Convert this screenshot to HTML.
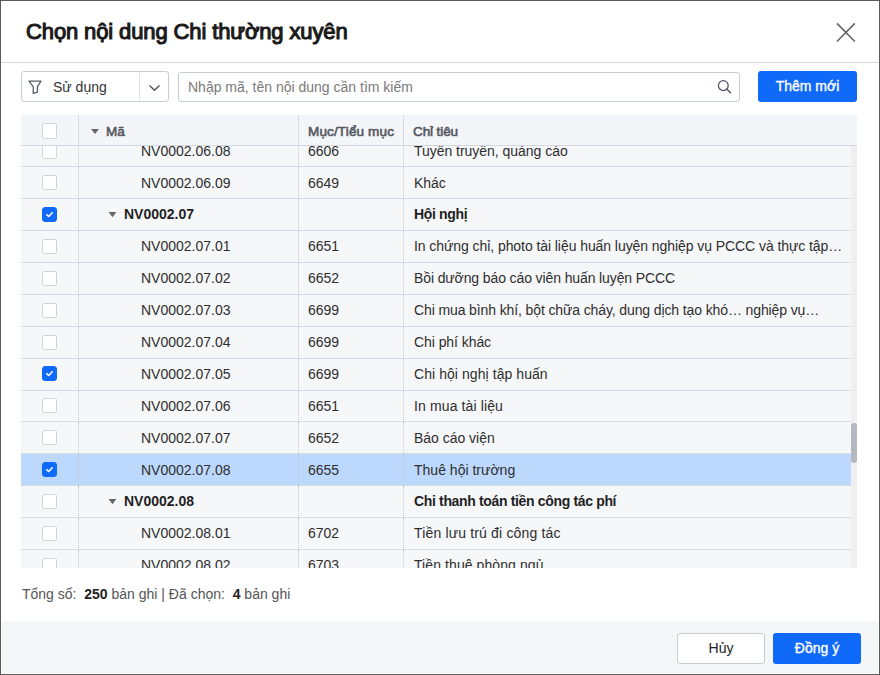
<!DOCTYPE html>
<html><head><meta charset="utf-8"><style>
*{box-sizing:border-box}
html,body{margin:0;padding:0;width:880px;height:675px;overflow:hidden;background:#fff}
body{font-family:"Liberation Sans",sans-serif;color:#212121;position:relative}
.frame{position:absolute;left:0;top:0;width:880px;height:675px;border:1px solid #5d5b59;background:#fff}
.title{position:absolute;left:26px;top:20px;font-size:22px;letter-spacing:-0.12px;font-weight:400;-webkit-text-stroke:1.1px #1a1a1a;color:#1a1a1a;white-space:nowrap;line-height:24px}
.close{position:absolute;left:835px;top:21px}
.sep{position:absolute;left:1px;top:62px;width:877px;height:1px;background:#d6d8de}
.filter{position:absolute;left:21px;top:71px;width:148px;height:31px;border:1px solid #c8ccd3;border-radius:3px;background:#fff}
.filter .fdiv{position:absolute;left:117px;top:1px;width:1px;height:28px;background:#dfe2e7}
.filter .ftxt{position:absolute;left:31px;top:1px;line-height:29px;font-size:14px;color:#333;white-space:nowrap}
.search{position:absolute;left:178px;top:72px;width:562px;height:30px;border:1px solid #c8ccd3;border-radius:3px;background:#fff}
.search .ph{position:absolute;left:9px;top:0;line-height:28px;font-size:14px;color:#7a7a7a;white-space:nowrap}
.btn-add{position:absolute;left:758px;top:71px;width:99px;height:31px;border-radius:3px;background:#0f69f9;color:#fff;font-size:14px;font-weight:400;-webkit-text-stroke:0.35px #fff;text-align:center;line-height:31px;white-space:nowrap}
.thead{position:absolute;left:21px;top:115px;width:836px;height:31px;background:#f4f5f9;border-bottom:1px solid #d5d7de}
.thead .hv{position:absolute;top:0;width:1px;height:30px;background:#d8dae1}
.thead .h{position:absolute;top:2px;line-height:30px;font-size:13.5px;font-weight:400;-webkit-text-stroke:0.6px #545961;letter-spacing:-0.1px;color:#545961;white-space:nowrap}
.tbody{position:absolute;left:21px;top:146px;width:836px;height:422px;overflow:hidden;background:#f6f7f9}
.row{position:absolute;left:0;width:830px;border-bottom:1px solid #d9dbe2;background:#f6f7f9;font-size:14px;white-space:nowrap}
.row.sel{background:#bdd8fd}
.cb{position:absolute;left:21px;top:50%;margin-top:-7.5px;width:15px;height:15px;border:1px solid #d2d5dc;border-radius:2px;background:#fff}
.cb.chk{background:#0f69f9;border-color:#0f69f9;border-radius:3px}
.cb svg{position:absolute;left:-1px;top:-1px}
.cb.chk{line-height:0}
.dv{position:absolute;top:0;bottom:-1px;width:1px;border-left:1px dotted #c4c7cf}
.d1{left:57px} .d2{left:277px} .d3{left:382px}
.code{position:absolute;top:1px;left:120px;color:#2e2e2e}
.gcode{left:103px;font-weight:700;color:#1f1f1f}
.tri2{position:absolute;left:87px}
.tri{position:absolute;left:87px;top:50%;margin-top:-3px;width:0;height:0;border-left:4.5px solid transparent;border-right:4.5px solid transparent;border-top:5px solid #666}
.muc{position:absolute;top:1px;left:287px;color:#2e2e2e}
.ct{position:absolute;top:1px;left:393px;letter-spacing:-0.12px;color:#2e2e2e}
.grp .ct{font-weight:700;letter-spacing:-0.4px;color:#1f1f1f}
.sb-track{position:absolute;left:830px;top:0;width:6px;height:100%;background:#efeff0}
.sb-thumb{position:absolute;left:830px;top:277px;width:6px;height:40px;border-radius:3px;background:#b3b8c1}
.summary{position:absolute;left:22px;top:585px;font-size:14px;color:#555;white-space:nowrap;line-height:18px}
.summary b{color:#222}
.footer{position:absolute;left:2px;top:621px;width:876px;height:52px;background:#f5f6f8}
.btn-cancel{position:absolute;left:677px;top:633px;width:88px;height:31px;border:1px solid #c9ccd3;border-radius:3px;background:#fff;font-size:14px;color:#222;text-align:center;line-height:29px}
.btn-ok{position:absolute;left:773px;top:633px;width:88px;height:31px;border-radius:3px;background:#0f69f9;color:#fff;font-size:14px;font-weight:400;-webkit-text-stroke:0.35px #fff;text-align:center;line-height:31px}
</style></head><body>
<div class="frame"></div>
<div class="title">Chọn nội dung Chi thường xuyên</div>
<svg class="close" width="24" height="24" viewBox="0 0 24 24"><path d="M2 2.4 L19.8 20.5 M19.8 2.4 L2 20.5" stroke="#666" stroke-width="1.6" fill="none"/></svg>
<div class="sep"></div>
<div class="filter">
 <svg style="position:absolute;left:6px;top:8px" width="14" height="15" viewBox="0 0 14 15"><path d="M1 1.2 H13 L9.4 6.6 V12.2 L5.2 13.4 V6.6 Z" fill="none" stroke="#555b66" stroke-width="1.25" stroke-linejoin="round"/></svg>
 <span class="ftxt">Sử dụng</span>
 <div class="fdiv"></div>
 <svg style="position:absolute;left:126px;top:12px" width="14" height="9" viewBox="0 0 14 9"><path d="M1.5 1.5 L6.5 6.2 L11.5 1.5" fill="none" stroke="#555" stroke-width="1.5"/></svg>
</div>
<div class="search"><span class="ph">Nhập mã, tên nội dung cần tìm kiếm</span>
 <svg style="position:absolute;left:537px;top:6px" width="18" height="18" viewBox="0 0 18 18"><circle cx="7.3" cy="6.6" r="4.9" fill="none" stroke="#4f5663" stroke-width="1.25"/><path d="M10.8 10.1 L14.4 13.7" stroke="#4f5663" stroke-width="1.4" stroke-linecap="round"/></svg>
</div>
<div class="btn-add">Thêm mới</div>
<div class="thead">
 <div class="cb" style="top:8px;margin-top:0;height:16px"></div>
 <div class="hv" style="left:57px"></div>
 <span class="tri" style="left:70px;top:14px;margin-top:0"></span>
 <span class="h" style="left:85px">Mã</span>
 <div class="hv" style="left:277px"></div>
 <span class="h" style="left:287px;letter-spacing:0.15px">Mục/Tiểu mục</span>
 <div class="hv" style="left:382px"></div>
 <span class="h" style="left:392px">Chỉ tiêu</span>
</div>
<div class="tbody">
<div class="row" style="top:-11px;height:32px;line-height:31px"><div class="cb" style="top:9px;margin-top:0"></div><div class="dv d1"></div><div class="dv d2"></div><div class="dv d3"></div><span class="code" style="top:1px">NV0002.06.08</span><span class="muc" style="top:1px">6606</span><span class="ct" style="top:1px;letter-spacing:-0.029px">Tuyên truyền, quảng cáo</span></div><div class="row" style="top:21px;height:32px;line-height:31px"><div class="cb" style="top:8px;margin-top:0"></div><div class="dv d1"></div><div class="dv d2"></div><div class="dv d3"></div><span class="code" style="top:1px">NV0002.06.09</span><span class="muc" style="top:1px">6649</span><span class="ct" style="top:1px;letter-spacing:-0.053px">Khác</span></div><div class="row grp" style="top:53px;height:32px;line-height:31px"><div class="cb chk" style="top:8px;margin-top:0"><svg width="15" height="15" viewBox="0 0 15 15"><path d="M4.8 7.8 L6.8 9.5 L10.2 5.8" fill="none" stroke="#fff" stroke-width="1.6" stroke-linecap="round" stroke-linejoin="round"/></svg></div><div class="dv d1"></div><div class="dv d2"></div><div class="dv d3"></div><svg class="tri2" style="top:13px" width="9" height="6" viewBox="0 0 9 6"><path d="M0.6 0 H8.4 L4.5 5.2 Z" fill="#666"/></svg><span class="code gcode" style="top:0px">NV0002.07</span><span class="muc" style="top:0px"></span><span class="ct" style="top:0px;letter-spacing:-0.343px">Hội nghị</span></div><div class="row" style="top:85px;height:32px;line-height:31px"><div class="cb" style="top:8px;margin-top:0"></div><div class="dv d1"></div><div class="dv d2"></div><div class="dv d3"></div><span class="code" style="top:0px">NV0002.07.01</span><span class="muc" style="top:0px">6651</span><span class="ct" style="top:0px;letter-spacing:-0.068px">In chứng chỉ, photo tài liệu huấn luyện nghiệp vụ PCCC và thực tập…</span></div><div class="row" style="top:117px;height:32px;line-height:31px"><div class="cb" style="top:8px;margin-top:0"></div><div class="dv d1"></div><div class="dv d2"></div><div class="dv d3"></div><span class="code" style="top:0px">NV0002.07.02</span><span class="muc" style="top:0px">6652</span><span class="ct" style="top:0px;letter-spacing:-0.112px">Bồi dưỡng báo cáo viên huấn luyện PCCC</span></div><div class="row" style="top:149px;height:32px;line-height:31px"><div class="cb" style="top:8px;margin-top:0"></div><div class="dv d1"></div><div class="dv d2"></div><div class="dv d3"></div><span class="code" style="top:0px">NV0002.07.03</span><span class="muc" style="top:0px">6699</span><span class="ct" style="top:0px;letter-spacing:-0.115px">Chi mua bình khí, bột chữa cháy, dung dịch tạo khó… nghiệp vụ…</span></div><div class="row" style="top:181px;height:32px;line-height:31px"><div class="cb" style="top:8px;margin-top:0"></div><div class="dv d1"></div><div class="dv d2"></div><div class="dv d3"></div><span class="code" style="top:0px">NV0002.07.04</span><span class="muc" style="top:0px">6699</span><span class="ct" style="top:0px;letter-spacing:-0.065px">Chi phí khác</span></div><div class="row" style="top:213px;height:32px;line-height:31px"><div class="cb chk" style="top:7px;margin-top:0"><svg width="15" height="15" viewBox="0 0 15 15"><path d="M4.8 7.8 L6.8 9.5 L10.2 5.8" fill="none" stroke="#fff" stroke-width="1.6" stroke-linecap="round" stroke-linejoin="round"/></svg></div><div class="dv d1"></div><div class="dv d2"></div><div class="dv d3"></div><span class="code" style="top:0px">NV0002.07.05</span><span class="muc" style="top:0px">6699</span><span class="ct" style="top:0px;letter-spacing:0.065px">Chi hội nghị tập huấn</span></div><div class="row" style="top:245px;height:31px;line-height:30px"><div class="cb" style="top:7px;margin-top:0"></div><div class="dv d1"></div><div class="dv d2"></div><div class="dv d3"></div><span class="code" style="top:0px">NV0002.07.06</span><span class="muc" style="top:0px">6651</span><span class="ct" style="top:0px;letter-spacing:0.123px">In mua tài liệu</span></div><div class="row" style="top:276px;height:32px;line-height:31px"><div class="cb" style="top:8px;margin-top:0"></div><div class="dv d1"></div><div class="dv d2"></div><div class="dv d3"></div><span class="code" style="top:1px">NV0002.07.07</span><span class="muc" style="top:1px">6652</span><span class="ct" style="top:1px;letter-spacing:-0.02px">Báo cáo viện</span></div><div class="row sel" style="top:308px;height:32px;line-height:31px"><div class="cb chk" style="top:8px;margin-top:0"><svg width="15" height="15" viewBox="0 0 15 15"><path d="M4.8 7.8 L6.8 9.5 L10.2 5.8" fill="none" stroke="#fff" stroke-width="1.6" stroke-linecap="round" stroke-linejoin="round"/></svg></div><div class="dv d1"></div><div class="dv d2"></div><div class="dv d3"></div><span class="code" style="top:1px">NV0002.07.08</span><span class="muc" style="top:1px">6655</span><span class="ct" style="top:1px;letter-spacing:0.009px">Thuê hội trường</span></div><div class="row grp" style="top:340px;height:32px;line-height:31px"><div class="cb" style="top:8px;margin-top:0"></div><div class="dv d1"></div><div class="dv d2"></div><div class="dv d3"></div><svg class="tri2" style="top:13px" width="9" height="6" viewBox="0 0 9 6"><path d="M0.6 0 H8.4 L4.5 5.2 Z" fill="#666"/></svg><span class="code gcode" style="top:0px">NV0002.08</span><span class="muc" style="top:0px"></span><span class="ct" style="top:0px;letter-spacing:-0.342px">Chi thanh toán tiền công tác phí</span></div><div class="row" style="top:372px;height:32px;line-height:31px"><div class="cb" style="top:8px;margin-top:0"></div><div class="dv d1"></div><div class="dv d2"></div><div class="dv d3"></div><span class="code" style="top:0px">NV0002.08.01</span><span class="muc" style="top:0px">6702</span><span class="ct" style="top:0px;letter-spacing:0.163px">Tiền lưu trú đi công tác</span></div><div class="row" style="top:404px;height:32px;line-height:31px"><div class="cb" style="top:8px;margin-top:0"></div><div class="dv d1"></div><div class="dv d2"></div><div class="dv d3"></div><span class="code" style="top:0px">NV0002.08.02</span><span class="muc" style="top:0px">6703</span><span class="ct" style="top:0px;letter-spacing:0.086px">Tiền thuê phòng ngủ</span></div>
<div class="sb-track"></div>
<div class="sb-thumb"></div>
</div>
<div class="summary">Tổng số:&nbsp; <b>250</b> bản ghi | Đã chọn:&nbsp; <b>4</b> bản ghi</div>
<div class="footer"></div>
<div class="btn-cancel">Hủy</div>
<div class="btn-ok">Đồng ý</div>
</body></html>
